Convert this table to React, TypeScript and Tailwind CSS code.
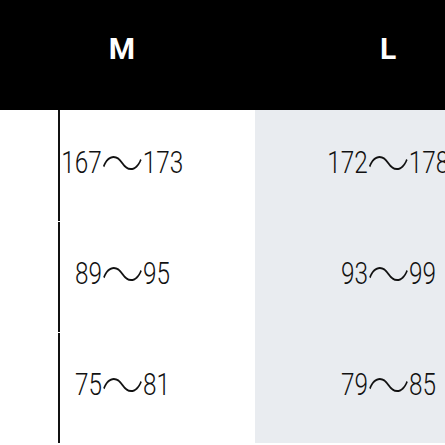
import React from 'react';

interface Range {
  from: string;
  to: string;
}

const rows: { m: Range; l: Range }[] = [
  { m: { from: '167', to: '173' }, l: { from: '172', to: '178' } },
  { m: { from: '89', to: '95' }, l: { from: '93', to: '99' } },
  { m: { from: '75', to: '81' }, l: { from: '79', to: '85' } },
];

const RangeText: React.FC<{ value: Range }> = ({ value }) => (
  <div className="inline-flex items-center whitespace-nowrap text-[#111] font-['Roboto',sans-serif] font-light scale-x-[0.76] origin-center">
    <span className="text-[32px] leading-none">{value.from}</span>
    <span className="text-[56px] leading-none font-['Noto_Sans_CJK_JP',sans-serif] font-thin mx-[-1px] -mt-[3px]">〜</span>
    <span className="text-[32px] leading-none">{value.to}</span>
  </div>
);

const App: React.FC = () => {
  return (
    <div className="w-[445px] h-[445px] overflow-hidden bg-white">
      <div className="-ml-[11px] w-[600px]">
        {/* Header */}
        <div className="flex h-[110px] bg-black text-white font-['Roboto',sans-serif] font-bold text-[30px] pb-[14px]">
          <div className="w-[266px] flex items-center justify-center">M</div>
          <div className="w-[266px] flex items-center justify-center">L</div>
        </div>

        {/* Body rows */}
        {rows.map((row, idx) => (
          <div key={idx} className="flex h-[111px]">
            <div className="relative w-[266px] bg-white flex items-center justify-center pb-[8px]">
              <RangeText value={row.m} />
              <div className={`absolute left-[69px] bottom-0 w-[2px] bg-[#111] ${idx === 0 ? 'top-0' : 'top-[1px]'}`}></div>
            </div>
            <div className="w-[266px] bg-[#e9ecf0] flex items-center justify-center pb-[8px]">
              <RangeText value={row.l} />
            </div>
          </div>
        ))}
      </div>
    </div>
  );
};

export default App;
